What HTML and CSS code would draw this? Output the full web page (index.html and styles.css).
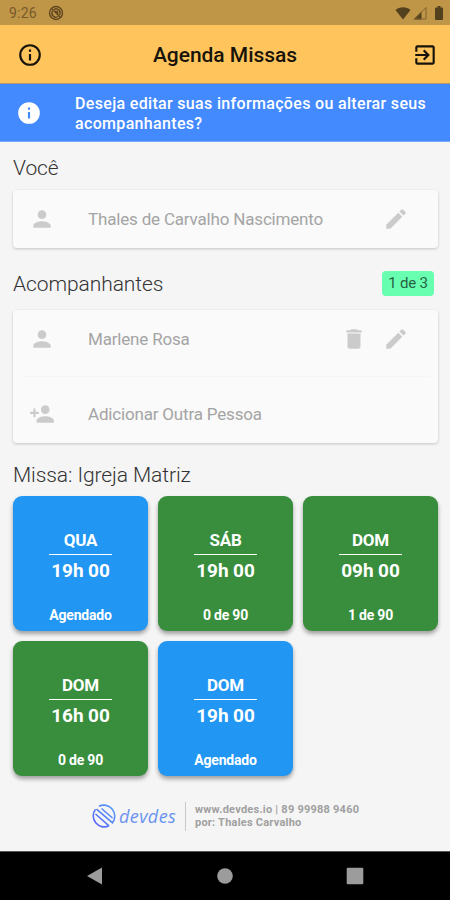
FILE: index.html
```html
<!DOCTYPE html>
<html lang="pt-BR">

<head>
 <meta charset="UTF-8">
 <meta name="viewport" content="width=device-width, initial-scale=1.0">
 <title>Agenda Missas</title>
 <link rel="stylesheet" href="styles.css">
</head>

<body>
   <svg class="sprite" width="0" height="0">
      <symbol id="person" viewBox="0 0 24 24"><path d="M12 12c2.21 0 4-1.79 4-4s-1.79-4-4-4-4 1.79-4 4 1.79 4 4 4zm0 2c-2.67 0-8 1.34-8 4v2h16v-2c0-2.66-5.33-4-8-4z"/></symbol>
      <symbol id="person_add" viewBox="0 0 24 24"><path d="M15 12c2.21 0 4-1.79 4-4s-1.79-4-4-4-4 1.79-4 4 1.79 4 4 4zm-9-2V7H4v3H1v2h3v3h2v-3h3v-2H6zm9 4c-2.67 0-8 1.34-8 4v2h16v-2c0-2.66-5.33-4-8-4z"/></symbol>
      <symbol id="edit" viewBox="0 0 24 24"><path d="M3 17.25V21h3.75L17.81 9.94l-3.75-3.75L3 17.25zM20.71 7.04a1 1 0 0 0 0-1.41l-2.34-2.34a1 1 0 0 0-1.41 0l-1.83 1.83 3.75 3.75 1.83-1.83z"/></symbol>
      <symbol id="delete" viewBox="0 0 24 24"><path d="M6 19c0 1.1.9 2 2 2h8c1.1 0 2-.9 2-2V7H6v12zM19 4h-3.500l-1-1h-5l-1 1H5v2h14V4z"/></symbol>
   </svg>

   <div id="wrapper">
      <div class="status_bar">
         <span class="clock">9:26</span>
         <svg class="status_sync" viewBox="0 0 16 16"><circle cx="8" cy="8" r="6.500"/><path d="M3.500 3.500l9 9M6 4.500a4 4 0 0 1 5.500 5.500M10 11.500A4 4 0 0 1 4.500 6M7 6.500h2.500V9"/></svg>
         <div class="status_icons">
            <svg width="16" height="14" viewBox="0 0 16 14"><path d="M8 13.500L.5 4C4.500.2 11.500.2 15.500 4z"/></svg>
            <svg width="14" height="14" viewBox="0 0 14 14"><path d="M.5 13.500L8.500 5.500v8z"/><path class="line" d="M1.500 13L13 1.500V13z"/></svg>
            <svg class="battery" width="8" height="14" viewBox="0 0 8 14"><path d="M2.500 0h3v1.500H7q1 0 1 1V13q0 1-1 1H1q-1 0-1-1V2.500q0-1 1-1h1.500z"/></svg>
         </div>
      </div>

      <header class="app_bar">
         <svg class="icon" viewBox="0 0 24 24"><path d="M11 7h2v2h-2zm0 4h2v6h-2zm1-9a10 10 0 1 0 0 20 10 10 0 0 0 0-20zm0 18a8 8 0 1 1 0-16 8 8 0 0 1 0 16z"/></svg>
         <h1>Agenda Missas</h1>
         <svg class="icon" viewBox="0 0 24 24"><path d="M10.090 15.590L11.500 17l5-5-5-5-1.410 1.410L12.670 11H3v2h9.670l-2.580 2.590zM19 3H5a2 2 0 0 0-2 2v4h2V5h14v14H5v-4H3v4a2 2 0 0 0 2 2h14c1.100 0 2-.9 2-2V5c0-1.100-.9-2-2-2z"/></svg>
      </header>

      <div class="banner">
         <svg class="icon" viewBox="0 0 24 24"><path d="M12 2a10 10 0 1 0 0 20 10 10 0 0 0 0-20zm1 15h-2v-6h2v6zm0-8h-2V7h2v2z"/></svg>
         <p>Deseja editar suas informações ou alterar seus<br>acompanhantes?</p>
      </div>

      <main class="content">
         <h2 class="title_you">Você</h2>
         <div class="card">
            <div class="row">
               <svg class="icon"><use href="#person"/></svg>
               <span class="name">Thales de Carvalho Nascimento</span>
               <svg class="icon action"><use href="#edit"/></svg>
            </div>
         </div>

         <div class="title_row">
            <h2>Acompanhantes</h2>
            <span class="badge">1 de 3</span>
         </div>
         <div class="card">
            <div class="row">
               <svg class="icon"><use href="#person"/></svg>
               <span class="name">Marlene Rosa</span>
               <svg class="icon action"><use href="#delete"/></svg>
               <svg class="icon action"><use href="#edit"/></svg>
            </div>
            <hr>
            <div class="row">
               <svg class="icon"><use href="#person_add"/></svg>
               <span class="name">Adicionar Outra Pessoa</span>
            </div>
         </div>

         <h2 class="title_mass">Missa: Igreja Matriz</h2>
         <div class="tiles">
            <div class="tile booked"><b class="day">QUA</b><b class="time">19h 00</b><b class="info">Agendado</b></div>
            <div class="tile"><b class="day">SÁB</b><b class="time">19h 00</b><b class="info">0 de 90</b></div>
            <div class="tile"><b class="day">DOM</b><b class="time">09h 00</b><b class="info">1 de 90</b></div>
            <div class="tile"><b class="day">DOM</b><b class="time">16h 00</b><b class="info">0 de 90</b></div>
            <div class="tile booked"><b class="day">DOM</b><b class="time">19h 00</b><b class="info">Agendado</b></div>
         </div>
      </main>

      <footer class="credits">
         <svg class="logo" viewBox="0 0 24 24">
            <defs>
               <linearGradient id="brand" x1="0" y1="1" x2="1" y2="0"><stop offset="0" stop-color="#5b5cf6"/><stop offset="1" stop-color="#55a2fb"/></linearGradient>
            </defs>
            <path d="M7 2.200A11 11 0 0 1 20.500 18.800L4.500 5.200M17 21.800A11 11 0 0 1 3.500 5.200M3.500 10L17 21.800M9.500 4.500L20.500 14"/>
         </svg>
         <span class="brand">devdes</span>
         <p>www.devdes.io | 89 99988 9460<br><span>por: Thales Carvalho</span></p>
      </footer>

      <nav class="nav_bar">
         <svg viewBox="0 0 18 18"><path d="M1 9L16 .5v17z"/></svg>
         <svg viewBox="0 0 18 18"><circle cx="9" cy="9" r="7.800"/></svg>
         <svg viewBox="0 0 18 18"><rect x=".7" y=".7" width="16.600" height="16.600" rx="1"/></svg>
      </nav>
   </div>
</body>

</html>
```
FILE: styles.css
```css
* { box-sizing: border-box; }
body { margin: 0; background: #f5f5f5; font-family: Roboto, "Liberation Sans", sans-serif; }
h1, h2, p { margin: 0; }
.sprite { display: block; }
#wrapper { width: 450px; height: 900px; display: flex; flex-direction: column; overflow: hidden; }
.icon { width: 26px; height: 26px; flex: none; fill: currentColor; }

.status_bar { height: 25px; flex: none; background: #bf9547; color: #795a2b; display: flex; align-items: center; padding: 1px 7px 0 9px; }
.clock { font-size: 14px; letter-spacing: .2px; width: 39px; }
.status_sync { width: 16px; height: 16px; fill: none; stroke: #61471f; stroke-width: 1.4; }
.status_icons { margin-left: auto; display: flex; gap: 2px; fill: #53401d; }
.status_icons .line { fill: none; stroke: #806332; }
.status_icons .battery { margin-left: 6px; }

.app_bar { height: 59px; flex: none; background: #ffc55c; color: #17130a; display: flex; align-items: center; justify-content: space-between; padding: 0 12px 0 17px; box-shadow: inset 0 -1px #b39a68; }
.app_bar h1 { font-size: 21px; font-weight: 500; letter-spacing: -.03px; padding: 1px 5px 0 0; }

.banner { height: 58px; flex: none; background: #448aff; color: #fff; display: flex; align-items: center; padding: 1px 17px 0 16px; border-bottom: 1px solid #76a8fb; }
.banner p { margin-left: 33px; padding-top: 2px; font-size: 16px; font-weight: 500; line-height: 20px; letter-spacing: .33px; white-space: nowrap; }

.content { padding: 0 12px 0 13px; }
h2 { font-size: 21px; font-weight: 300; line-height: 26px; letter-spacing: -.08px; color: #333; }
.title_you { padding: 13px 0 9px; }
.card { background: #fafafa; border-radius: 4px; box-shadow: 0 1px 3px rgba(0,0,0,.2); }
.row { height: 58px; display: flex; align-items: center; padding: 0 29px 0 16px; color: #cbcbcb; }
.name { flex: 1; margin-left: 33px; font-size: 17px; color: #a4a4a4; letter-spacing: -.18px; margin-top: -1px; }
.action { margin-left: 16px; }
.card hr { height: 1px; margin: 8px; border: 0; background: #f5f5f5; }
.title_row { height: 62px; display: flex; align-items: center; justify-content: space-between; padding: 9px 4px 0 0; }
.badge { width: 52px; height: 25px; border-radius: 4px; background: #69ffb0; color: #256344; font-size: 15px; letter-spacing: -.2px; line-height: 25px; text-align: center; }
.title_mass { padding: 19px 0 8px; }

.tiles { display: grid; grid-template-columns: repeat(3, 135px); gap: 10px; }
.tile { height: 135px; border-radius: 9px; background: #388e3c; color: #fff; display: flex; flex-direction: column; align-items: center; padding-top: 33px; box-shadow: 0 3px 4px rgba(0,0,0,.35); }
.tile.booked { background: #2196f3; }
.tile .day { width: 63px; height: 26px; border-bottom: 1px solid #fff; font-size: 17px; letter-spacing: -.2px; line-height: 22px; text-align: center; }
.tile .time { font-size: 19px; letter-spacing: -.1px; line-height: 32px; }
.tile .info { margin-top: 18px; font-size: 14px; letter-spacing: -.2px; line-height: 20px; }

.credits { height: 75px; margin-top: auto; flex: none; display: flex; align-items: center; padding: 5px 0 0 92px; }
.logo { width: 24px; height: 24px; fill: none; stroke: url(#brand); stroke-width: 1.6; }
.brand { width: 69px; padding-left: 3px; font-family: "Open Sans", sans-serif; font-size: 18px; letter-spacing: .4px; font-style: italic; color: #6a92f0; }
.credits p { height: 29px; border-left: 1px solid #c8c8c8; padding: 1px 0 0 9px; font-size: 11px; font-weight: 700; letter-spacing: .23px; line-height: 13px; color: #a0a0a0; white-space: nowrap; }

.nav_bar { height: 49px; flex: none; background: #000; border-top: 1px solid #555; display: flex; gap: 112px; align-items: center; padding-left: 86px; }
.nav_bar svg { width: 18px; height: 18px; fill: #9c9c9c; }
```
